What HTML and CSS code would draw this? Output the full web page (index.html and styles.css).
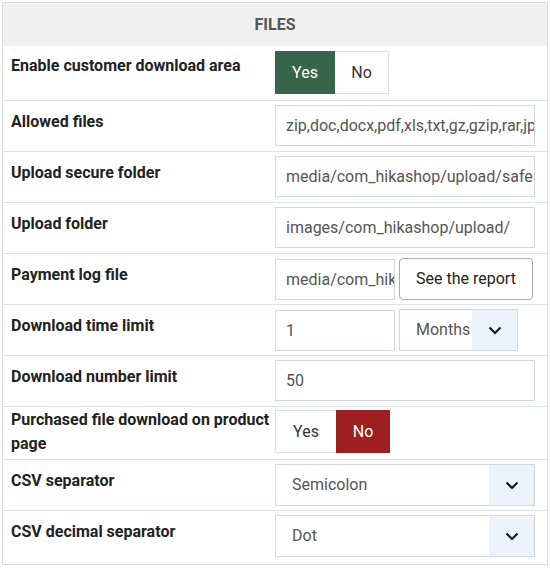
FILE: index.html
```html
<!DOCTYPE html>
<html>
<head>
<meta charset="utf-8">
<link rel="stylesheet" href="styles.css">
</head>
<body>
<div class="panel">
  <div class="panel-head">FILES</div>
  <div class="row first">
    <div class="label">Enable customer download area</div>
    <div class="ctrl">
      <div class="toggle"><span class="opt yes on">Yes</span><span class="opt no">No</span></div>
    </div>
  </div>
  <div class="row">
    <div class="label">Allowed files</div>
    <div class="ctrl"><div class="input full">zip,doc,docx,pdf,xls,txt,gz,gzip,rar,jpg,gif,tar.gz,xlsx,pps,csv,bmp,epub</div></div>
  </div>
  <div class="row">
    <div class="label">Upload secure folder</div>
    <div class="ctrl"><div class="input full">media/com_hikashop/upload/safe</div></div>
  </div>
  <div class="row">
    <div class="label">Upload folder</div>
    <div class="ctrl"><div class="input full">images/com_hikashop/upload/</div></div>
  </div>
  <div class="row">
    <div class="label">Payment log file</div>
    <div class="ctrl pair">
      <div class="input short">media/com_hikashop/upload/safe/logs/report_</div>
      <div class="btn">See the report</div>
    </div>
  </div>
  <div class="row">
    <div class="label">Download time limit</div>
    <div class="ctrl pair">
      <div class="input short">1</div>
      <div class="select small"><span class="sel-text">Months</span><span class="arrow"><svg width="14" height="9" viewBox="0 0 14 9"><path d="M1.5 1.5 L7 7 L12.5 1.5" fill="none" stroke="#111" stroke-width="2"/></svg></span></div>
    </div>
  </div>
  <div class="row">
    <div class="label">Download number limit</div>
    <div class="ctrl"><div class="input full">50</div></div>
  </div>
  <div class="row tall">
    <div class="label">Purchased file download on product page</div>
    <div class="ctrl">
      <div class="toggle"><span class="opt yes">Yes</span><span class="opt no on">No</span></div>
    </div>
  </div>
  <div class="row">
    <div class="label">CSV separator</div>
    <div class="ctrl"><div class="select full"><span class="sel-text">Semicolon</span><span class="arrow"><svg width="14" height="9" viewBox="0 0 14 9"><path d="M1.5 1.5 L7 7 L12.5 1.5" fill="none" stroke="#111" stroke-width="2"/></svg></span></div></div>
  </div>
  <div class="row">
    <div class="label">CSV decimal separator</div>
    <div class="ctrl"><div class="select full"><span class="sel-text">Dot</span><span class="arrow"><svg width="14" height="9" viewBox="0 0 14 9"><path d="M1.5 1.5 L7 7 L12.5 1.5" fill="none" stroke="#111" stroke-width="2"/></svg></span></div></div>
  </div>
</div>
</body>
</html>
```
FILE: styles.css
```css
html, body {
  margin: 0;
  padding: 0;
  background: #fff;
}
body {
  font-family: Roboto, "Liberation Sans", Arial, sans-serif;
  color: #222;
}
.panel {
  margin: 2px 0 0 2px;
  width: 544px;
  border: 1px solid #d9d9d9;
  padding-bottom: 3px;
  box-sizing: content-box;
}
.panel-head {
  height: 43px;
  background: #f0f0f0;
  display: flex;
  align-items: center;
  justify-content: center;
  font-weight: 700;
  font-size: 16px;
  color: #555;
}
.row {
  display: grid;
  grid-template-columns: 264px 260px;
  padding: 4px 0 4px 8px;
  border-top: 1px solid #dee2e6;
  min-height: 42px;
}
.row.first {
  border-top: none;
  padding: 5px 0 6px 8px;
}
.row.tall {
  padding: 3px 0 3px 8px;
  min-height: 46px;
}
.label {
  font-weight: 700;
  font-size: 16px;
  line-height: 24px;
  padding-top: 5px;
  color: #222;
}
.row.first .label {
  padding-top: 3px;
}
.row.tall .label {
  padding-top: 0;
  margin-top: -2px;
}
.ctrl {
  display: flex;
  align-items: flex-start;
}
.pair {
  gap: 4px;
}
.input {
  box-sizing: border-box;
  height: 41px;
  border: 1px solid #d4d8dc;
  padding: 0 10px;
  font-size: 16px;
  line-height: 39px;
  color: #555;
  white-space: nowrap;
  overflow: hidden;
}
.input.full { width: 260px; }
.input.short { width: 120px; margin-top: 1px; }
.btn {
  box-sizing: border-box;
  width: 134px;
  height: 42px;
  border: 1px solid #a9adb1;
  border-radius: 4px;
  font-size: 16px;
  line-height: 40px;
  text-align: center;
  color: #222;
}
.select {
  box-sizing: border-box;
  height: 42px;
  border: 1px solid #d4d8dc;
  display: flex;
  font-size: 16px;
  color: #555;
  overflow: hidden;
}
.select.full { width: 260px; }
.select.small { width: 119px; }
.sel-text {
  flex: 1;
  padding-left: 16px;
  line-height: 40px;
  white-space: nowrap;
  overflow: hidden;
}
.arrow {
  width: 45px;
  background: #eef3fb;
  display: flex;
  align-items: center;
  justify-content: center;
}
.toggle {
  display: flex;
  height: 43px;
  box-sizing: border-box;
  border: 1px solid #dde0e3;
}
.opt {
  font-size: 16px;
  line-height: 41px;
  text-align: center;
  color: #333;
}
.opt.yes { width: 60px; }
.opt.no { width: 53px; }
.opt.yes.on { background: #36654a; color: #fff; margin: -1px 0 -1px -1px; width: 60px; line-height: 43px; }
.opt.no.on { background: #9d1f1f; color: #fff; margin: -1px -1px -1px 0; width: 54px; line-height: 43px; }
```
